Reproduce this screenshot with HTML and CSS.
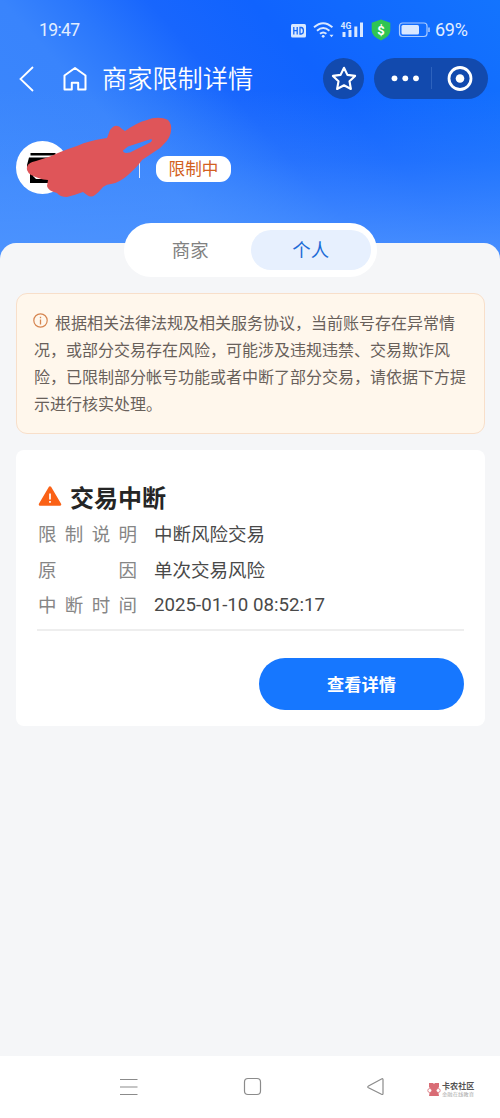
FILE: index.html
```html
<!DOCTYPE html>
<html lang="zh-CN">
<head>
<meta charset="utf-8">
<title>商家限制详情</title>
<link rel="stylesheet" href="styles.css">
</head>
<body>
<div class="screen">
  <header class="hero">
    <div class="status">
      <span class="clock">19:47</span>
      <svg class="status-icons" width="142" height="24" viewBox="0 0 142 24">
        <g fill="#d9e8ff">
          <rect x="1" y="6" width="15" height="13.500" rx="1.500"/>
          <path d="M3.800 9v7.500M7.200 9v7.500M3.800 12.700h3.400M10 9.500v6.500h1.200q2.200 0 2.200-3.200t-2.200-3.300z" fill="none" stroke="#1668f8" stroke-width="1.300"/>
        </g>
        <g fill="none" stroke="#d9e8ff" stroke-width="1.900">
          <path d="M24 9.300q9.200-8.300 18.400 0M27 12.700q6.200-5.400 12.400 0M30 15.800q3.200-2.800 6.400 0"/>
        </g>
        <circle cx="33.200" cy="18.300" r="1.400" fill="#d9e8ff"/>
        <path d="M39.500 16.800h4l-2 2.400z" fill="#d9e8ff"/>
        <text class="net" x="50.500" y="11">4G</text>
        <g fill="#d9e8ff">
          <rect x="52.500" y="14" width="3" height="5"/><rect x="58.500" y="12" width="3" height="7"/>
          <rect x="64.300" y="8.500" width="3" height="10.500"/><rect x="70" y="4.500" width="3" height="14.500"/>
        </g>
        <path d="M91 1.500l9.300 3.300v8q0 5.500-9.300 9.700-9.300-4.200-9.300-9.700v-8z" fill="#2fc553"/>
        <text class="dollar" x="91" y="16.500">$</text>
        <rect x="109.500" y="5" width="27.500" height="13.500" rx="3" fill="none" stroke="#a9caff" stroke-width="1.200"/>
        <rect x="111.500" y="7" width="17.500" height="9.500" rx="1.500" fill="#d9e8ff"/>
        <path d="M139 9.500v4.500" stroke="#a9caff" stroke-width="1.600"/>
      </svg>
      <span class="percent">69%</span>
    </div>
    <nav class="nav">
      <svg class="back" width="18" height="28" viewBox="0 0 18 28"><path d="M15 2L2.500 14 15 26" fill="none" stroke="#fff" stroke-width="1.800"/></svg>
      <svg class="home" width="26" height="28" viewBox="0 0 26 28"><path d="M2.500 24.500V10.500L13 3l10.500 7.500v14h-7.300v-6.700h-6.400v6.700z" fill="none" stroke="#fff" stroke-width="2" stroke-linejoin="round"/></svg>
      <h1 class="title">商家限制详情</h1>
      <div class="star"><svg width="28" height="28" viewBox="0 0 28 28"><path d="M14 2.800l3.400 7.100 7.700 1-5.600 5.400 1.400 7.700-6.900-3.700-6.900 3.700 1.400-7.700-5.600-5.400 7.700-1z" fill="none" stroke="#fff" stroke-width="2.100" stroke-linejoin="round"/></svg></div>
      <div class="capsule">
        <svg width="114" height="41" viewBox="0 0 114 41"><g fill="#fff"><circle cx="20.500" cy="20.300" r="2.900"/><circle cx="31.300" cy="20.300" r="2.900"/><circle cx="42" cy="20.300" r="2.900"/><circle cx="86" cy="20.500" r="4.300"/></g><circle cx="86" cy="20.500" r="11" fill="none" stroke="#fff" stroke-width="2.800"/><path d="M57.500 9v22" stroke="#2d62bd" stroke-width="1"/></svg>
      </div>
    </nav>
    <div class="merchant">
      <div class="avatar"><svg class="shop" width="53" height="53" viewBox="0 0 53 53"><path d="M14.500 12h25v2.500h-25zM13 16.500h28l2 7v4h-2V42H14V28h-3v-4z"/><path d="M17 30h18v8H20l-3-3z" fill="#fff"/></svg>
        <svg class="scribble" width="150" height="84" viewBox="22 114 150 84"><path fill="#df5559" fill-rule="evenodd" d="M27 169C26 163 31 161 36 160L50 155.500C59 151 68 148 77 145C86 141 94 139 101 138L107 137Q109 132 110 129Q116 121 122 128L125 130C132 125 139 121 147 119C154 116 162 116 168 119Q172 123 171 130C170 138 165 142 160 147L142 159C138 165 133 169 128 174C122 179 117 182 111 183Q107 183 103 186Q99 191 95 194Q91 197 87 194L83 191Q75 194 67 196Q60 196 57 192Q48 190 47 185L48 179C42 179 36 176 31 174Q28 172 27 169ZM123 149.500Q123 153 130 151.500L138 147.500L151 141Q154 137 148 139L128 145.500Z"/></svg>
      </div>
      <span class="rule"></span>
      <span class="tag">限制中</span>
    </div>
  </header>
  <main class="sheet">
    <div class="tabs"><span class="tab">商家</span><span class="tab active">个人</span></div>
    <section class="notice">
      <p class="line"><svg class="info" width="15" height="15" viewBox="0 0 15 15"><circle cx="7.500" cy="7.500" r="6.700" fill="none" stroke="#d68550" stroke-width="1.200"/><path d="M7.500 3.700v1.500M7.500 6.400v5" stroke="#d68550" stroke-width="1.300"/></svg>根据相关法律法规及相关服务协议，当前账号存在异常情</p>
      <p class="line">况，或部分交易存在风险，可能涉及违规违禁、交易欺诈风</p>
      <p class="line">险，已限制部分帐号功能或者中断了部分交易，请依据下方提</p>
      <p class="line">示进行核实处理。</p>
    </section>
    <section class="card">
      <h2 class="card-title"><svg width="25" height="22" viewBox="0 0 25 22"><path d="M12 1.500L22 18.500H2z" fill="#fa6116" stroke="#fa6116" stroke-width="2.500" stroke-linejoin="round"/><path d="M12 7.500v6M12 15v1.800" stroke="#fff" stroke-width="1.700"/></svg>交易中断</h2>
      <dl class="facts">
        <dt><span>限</span><span>制</span><span>说</span><span>明</span></dt><dd>中断风险交易</dd>
        <dt><span>原</span><span>因</span></dt><dd>单次交易风险</dd>
        <dt><span>中</span><span>断</span><span>时</span><span>间</span></dt><dd class="date">2025-01-10 08:52:17</dd>
      </dl>
      <button class="detail">查看详情</button>
    </section>
  </main>
  <footer class="system">
    <svg class="keys" width="270" height="20" viewBox="0 0 270 20" fill="none" stroke="#8b8b8b" stroke-width="1.200"><path d="M1 2.500h17.500M1 10h17.500M1 17.500h17.500"/><rect x="125.500" y="1.500" width="16" height="16" rx="3.500"/><path d="M264 2.500v14q0 1.500-1.500.8L249.500 10.800q-1.500-.9 0-1.800L262.500 2q1.500-.8 1.500.5z"/></svg>
    <div class="mark">
      <svg width="14" height="15" viewBox="0 0 14 15"><path d="M2 1h4l1 1 1-1h4v4l-1.500 2 1 4 .5 3H2l.5-3 1-4L2 5z" fill="#d96c75"/><circle cx="2.800" cy="8.500" r="2" fill="#fff" stroke="#d96c75" stroke-width=".8"/><circle cx="11.200" cy="8.500" r="2" fill="#fff" stroke="#d96c75" stroke-width=".8"/></svg>
      <div class="mark-text"><b>卡农社区</b><svg width="32" height="6" viewBox="0 0 32 6"><text class="motto" x="0" y="5" textLength="32" lengthAdjust="spacingAndGlyphs">金融在线教育</text></svg></div>
    </div>
  </footer>
</div>
</body>
</html>
```
FILE: styles.css
```css
* { box-sizing: border-box; margin: 0; padding: 0; }
body { font-family: "Noto Sans CJK SC", sans-serif; }
.screen {
  width: 500px; height: 1118px; display: flex; flex-direction: column; overflow: hidden;
  background:
    linear-gradient(to bottom, rgba(82,152,255,0) 90px, rgba(82,152,255,.25) 160px, rgba(78,148,255,.85) 250px),
    linear-gradient(48deg, #3c88fc 0, #3984fc 32%, #2b78fc 41%, #1866fd 52%, #1063fe 66%, #1374fe 100%) 0 0 / 500px 260px no-repeat,
    #5298ff;
}
.hero { height: 243px; flex: none; color: #fff; }
.status { height: 60px; padding: 0 31px 0 39px; display: flex; align-items: center; color: #e2eeff; }
.clock, .percent { font-family: Roboto, sans-serif; font-size: 17.500px; line-height: 24px; letter-spacing: -.6px; }
.status-icons { margin-left: auto; }
.percent { margin-left: 3px; width: 34px; font-size: 18px; letter-spacing: -.3px; white-space: nowrap; }
.net { font: 700 8.500px Roboto, sans-serif; fill: #d9e8ff; }
.dollar { font: 700 13px Roboto, sans-serif; fill: #fff; text-anchor: middle; }
.nav { height: 41px; margin-top: -2px; padding: 0 12px 0 18px; display: flex; align-items: center; }
.home { margin-left: 26px; }
.title { margin: 0 0 4px 14px; font-size: 25.200px; line-height: 36px; font-weight: 350; white-space: nowrap; }
.star { width: 41px; height: 41px; margin-left: auto; border-radius: 50%; background: #124aae; display: grid; place-items: center; }
.capsule { width: 114px; height: 41px; margin-left: 10px; border-radius: 21px; background: #124aae; }
.capsule svg { display: block; }
.merchant { height: 54px; margin-top: 41px; padding-left: 16px; display: flex; align-items: center; }
.avatar { position: relative; width: 53px; height: 53px; border-radius: 50%; background: #fff; }
.shop { display: block; }
.scribble { position: absolute; left: 6px; top: -26px; }
.rule { width: 1px; height: 20px; margin: 2px 16px 0 70px; background: #e2edff; }
.tag { width: 75px; height: 26px; margin-top: 3px; border-radius: 11px; background: #fff; color: #d26020; font-size: 16.600px; line-height: 24px; text-align: center; }
.sheet { flex: 1; padding: 0 15px 0 16px; border-radius: 16px 16px 0 0; background: #f5f6f8; }
.tabs { width: 253px; height: 54px; margin: -20px 0 0 108px; padding: 7px 6px; display: flex; border-radius: 27px; background: #fff; }
.tab { flex: 1; height: 40px; font-size: 18.400px; line-height: 38px; text-align: center; color: #818181; }
.tab.active { border-radius: 20px; color: #1b6bd6; background: #e7f0fe; }
.notice { height: 141px; margin-top: 16px; padding: 15px 17px; border: 1px solid #f8dfca; border-radius: 11px; background: #fff7ec; color: #68605a; }
.line { font-size: 16px; line-height: 27px; white-space: nowrap; }
.info { margin-right: 7px; vertical-align: 1px; margin-left: -1px; }
.card { height: 276px; margin-top: 16px; padding: 28px 21px 0 22px; border-radius: 8px; background: #fff; display: flex; flex-direction: column; }
.card-title { height: 38px; display: flex; align-items: center; gap: 7px; color: #252525; font-size: 24px; font-weight: 700; line-height: 36px; }
.facts { height: 115px; margin-left: -1px; padding: 0 0 0 1px; border-bottom: 2px solid #eee; display: grid; grid-template-columns: 99px 1fr; grid-auto-rows: 35.500px; column-gap: 17px; font-size: 18.500px; line-height: 35px; }
.facts dt { display: flex; justify-content: space-between; color: #868686; }
.facts dd { color: #494949; }
.facts .date { padding-top: 1px; font-family: Roboto, sans-serif; font-size: 18.700px; }
.detail { width: 205px; height: 52px; margin: 27px 0 0 auto; border: 0; border-radius: 26px; background: #1677ff; color: #fff; font: 700 17.200px/50px "Noto Sans CJK SC", sans-serif; }
.system { height: 62px; flex: none; padding: 0 25px 0 119px; display: flex; align-items: center; background: #fff; }
.mark { margin: 5px 0 0 auto; display: flex; align-items: center; gap: 1px; }
.mark-text { width: 33px; display: grid; gap: 1px; color: #555; }
.mark-text b { font-size: 8.100px; line-height: 8px; white-space: nowrap; }
.motto { font-size: 5px; fill: #aaa; }
```
